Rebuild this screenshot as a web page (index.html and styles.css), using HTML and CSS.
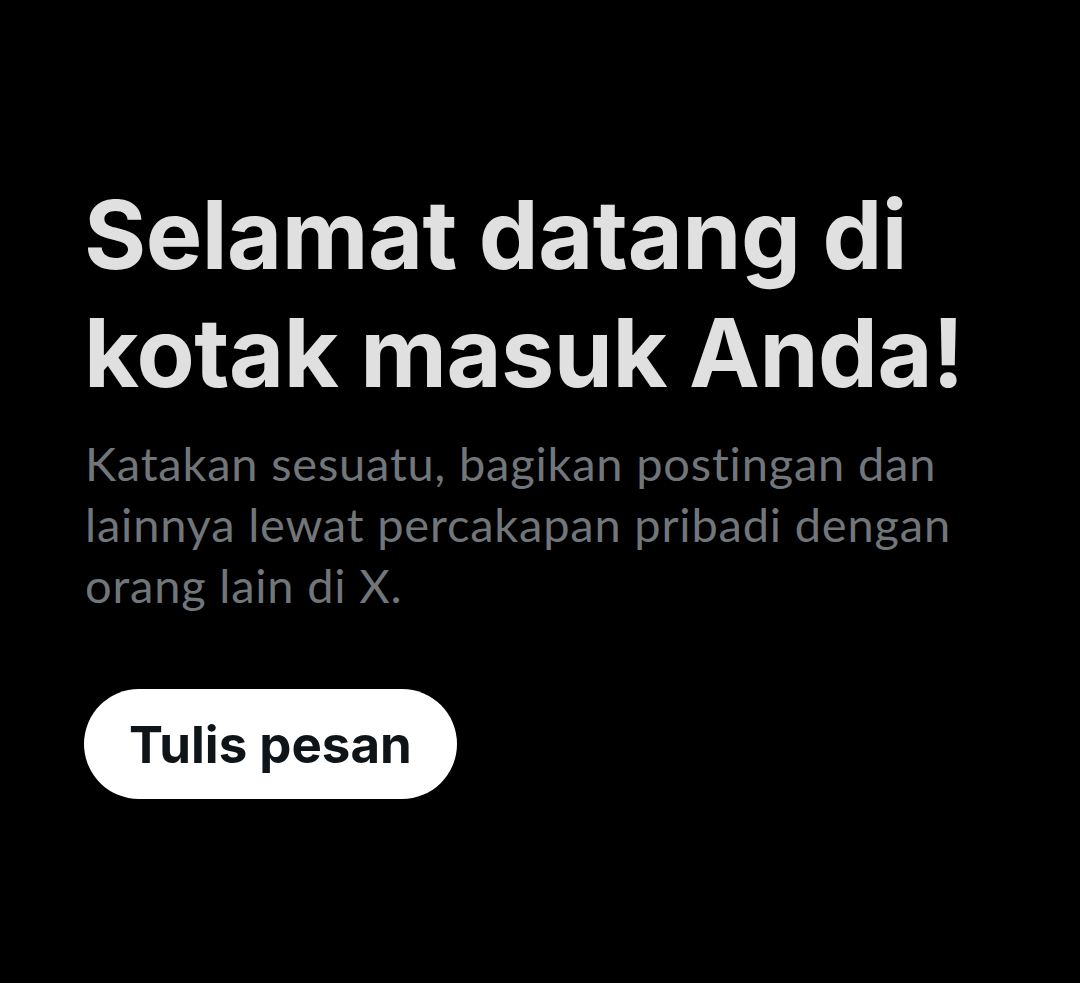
FILE: index.html
```html
<!DOCTYPE html>
<html lang="id">
<head>
<meta charset="utf-8">
<link rel="stylesheet" href="styles.css">
</head>
<body>
<main class="welcome">
  <h1 class="title">Selamat datang di kotak masuk Anda!</h1>
  <p class="desc">Katakan sesuatu, bagikan postingan dan lainnya lewat percakapan pribadi dengan orang lain di X.</p>
  <button class="cta">Tulis pesan</button>
</main>
</body>
</html>
```
FILE: styles.css
```css
html, body {
  margin: 0;
  padding: 0;
  background: #000;
  height: 100%;
}
.welcome {
  display: flex;
  flex-direction: column;
  align-items: flex-start;
  padding: 176px 60px 0 84px;
  max-width: 900px;
}
.title {
  margin: 0;
  font-family: Inter, "Noto Sans", sans-serif;
  font-weight: 700;
  font-size: 95px;
  line-height: 118px;
  letter-spacing: -0.5px;
  color: #e0e0e0;
}
.desc {
  margin: 21px 0 0 1px;
  font-family: Lato, "Noto Sans", sans-serif;
  font-size: 47px;
  line-height: 61px;
  letter-spacing: 0.8px;
  font-variant-ligatures: none;
  color: #71767b;
}
.cta {
  margin: 73px 0 0;
  height: 110px;
  padding: 0 45px;
  border: none;
  border-radius: 55px;
  background: #fff;
  color: #0f1419;
  font-family: Inter, "Noto Sans", sans-serif;
  font-weight: 700;
  font-size: 51px;
}
```
